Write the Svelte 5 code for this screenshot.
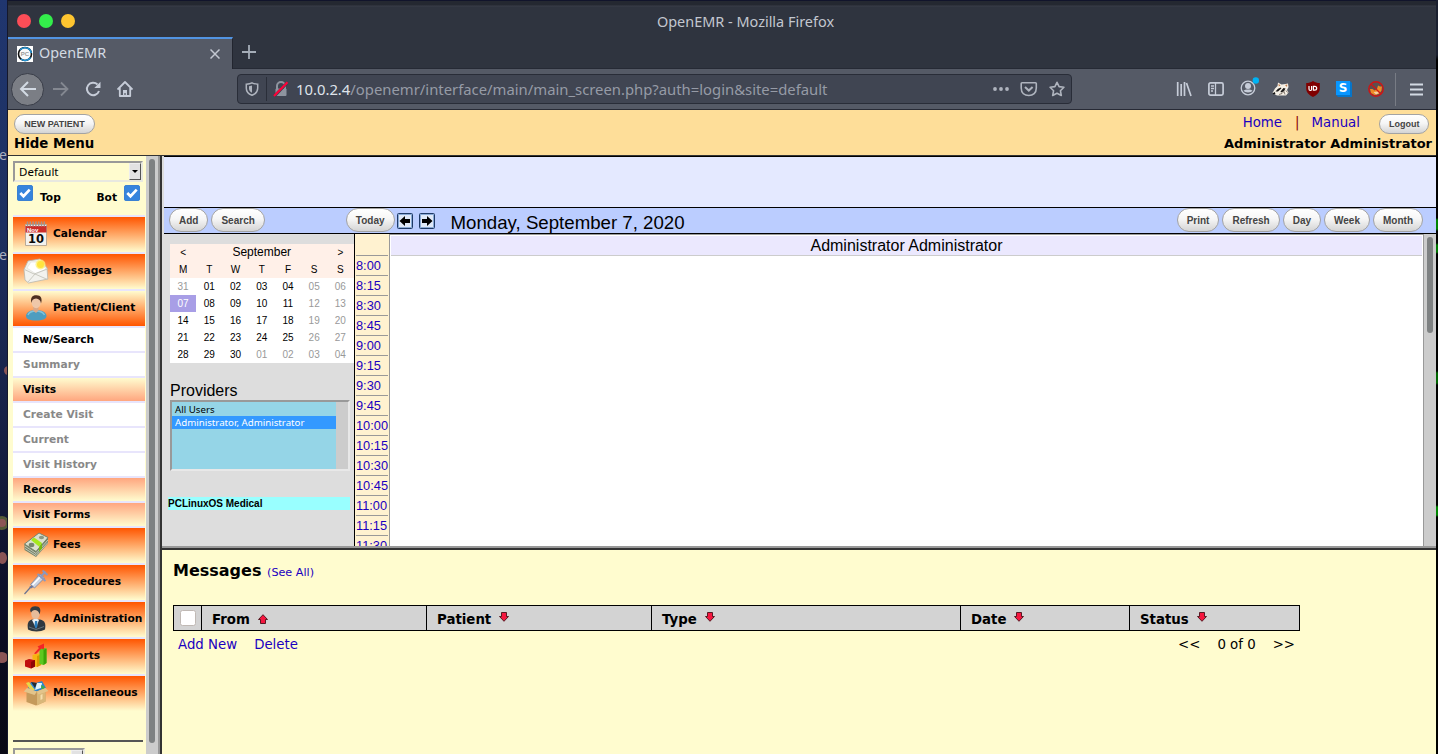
<script>
  const menu = [
    { label: 'Calendar', icon: 'cal', kind: 'top' },
    { label: 'Messages', icon: 'mail', kind: 'top' },
    { label: 'Patient/Client', icon: 'person', kind: 'top open' },
    { label: 'New/Search', kind: 'sub' },
    { label: 'Summary', kind: 'sub off' },
    { label: 'Visits', kind: 'sub group open' },
    { label: 'Create Visit', kind: 'sub off' },
    { label: 'Current', kind: 'sub off' },
    { label: 'Visit History', kind: 'sub off' },
    { label: 'Records', kind: 'sub group' },
    { label: 'Visit Forms', kind: 'sub group' },
    { label: 'Fees', icon: 'money', kind: 'top' },
    { label: 'Procedures', icon: 'syringe', kind: 'top' },
    { label: 'Administration', icon: 'admin', kind: 'top' },
    { label: 'Reports', icon: 'chart', kind: 'top' },
    { label: 'Miscellaneous', icon: 'box', kind: 'top' }
  ];
  const weekdays = ['M', 'T', 'W', 'T', 'F', 'S', 'S'];
  const first = new Date(2020, 7, 31);
  const days = Array.from({ length: 35 }, (_, i) => {
    const d = new Date(first.getFullYear(), first.getMonth(), first.getDate() + i);
    return {
      text: String(d.getDate()).padStart(2, '0'),
      dim: d.getMonth() !== 8 || i % 7 > 4,
      today: i === 7
    };
  });
  const slots = Array.from({ length: 15 }, (_, i) => `${8 + Math.floor(i / 4)}:${String((i % 4) * 15).padStart(2, '0')}`);
  const columns = [
    { label: 'From', up: true },
    { label: 'Patient' },
    { label: 'Type' },
    { label: 'Date' },
    { label: 'Status' }
  ];
  const views = ['Print', 'Refresh', 'Day', 'Week', 'Month'];
</script>

{#snippet check()}
  <svg class="check" width="16" height="16" viewBox="0 0 16 16">
    <rect width="16" height="16" rx="2.5" fill="#3684dd" />
    <rect x=".5" y=".5" width="15" height="15" rx="2" fill="none" stroke="#3a80d2" />
    <path d="M3.3 8l3.200 3.200 6.200-6.600" fill="none" stroke="#fff" stroke-width="2.700" />
  </svg>
{/snippet}

{#snippet arrow(left)}
  <svg class="navarrow" width="16" height="16" viewBox="0 0 16 16">
    <rect x=".5" y=".5" width="15" height="15" rx="1" fill="#cfe0f7" stroke="#1f3a66" />
    <rect x="1.5" y="1.5" width="13" height="13" fill="#dfe9f8" stroke="#8aaad6" />
    <path transform={left ? '' : 'matrix(-1 0 0 1 16 0)'} d="M2.500 8L8 3v3h5v4H8v3z" fill="#000" />
  </svg>
{/snippet}

{#snippet menuIcon(name)}
  <svg class="micon" width="26" height="26" viewBox="0 0 26 26">
    {#if name === 'cal'}
      <path d="M2.500 3.500h21v21h-21z" fill="#f4f2ee" stroke="#b9aa97" />
      <path d="M2.500 5h21v6.500h-21z" fill="#cc2d2a" />
      <path d="M4.500.5v5M7.300.5v5M10.100.5v5M12.900.5v5M15.700.5v5M18.500.5v5M21.300.5v5" stroke="#a3938f" stroke-width="1.500" />
      <text x="4" y="10.700" font-family="Liberation Sans" font-weight="700" font-size="6" fill="#fff">Nov</text>
      <text x="13" y="22" text-anchor="middle" font-family="DejaVu Sans" font-weight="700" font-size="11.5" fill="#0a0a0a">10</text>
    {:else if name === 'mail'}
      <path d="M1 11.500L5 3l12-2 7 9 .8 11L5.500 25 2 22z" fill="#f2f2ee" stroke="#b8b8ae" stroke-width=".8" />
      <path d="M4 10l4-6h9l6 7-10 5z" fill="#fff" stroke="#deded8" stroke-width=".6" />
      <path d="M1.500 11.500l9.500 4.500 13.500-5M5 24l7-8 12.500 5.500" fill="none" stroke="#c4c4bb" stroke-width=".9" />
      <circle cx="17.500" cy="6.500" r="5" fill="#fff176" opacity=".8" /><circle cx="17.500" cy="6.500" r="3.500" fill="#ffe43e" />
    {:else if name === 'person'}
      <path d="M3 21c0-4 5-6 10-6s10.500 2 10.500 6c0 3-4 4.500-10.500 4.500S3 24 3 21z" fill="#4d9dc0" />
      <path d="M5 20c1-3 4-4 8-4s7 1 8.500 4" fill="none" stroke="#82c4dc" stroke-width="1.400" />
      <path d="M10.500 11h5v4.500L13 18l-3-2.500z" fill="#d9a889" />
      <ellipse cx="13.200" cy="7.500" rx="4.500" ry="5.700" fill="#efc7a9" />
      <path d="M8.500 8C7 2.500 9.500 0 13.500 0.200 18 .2 19.500 3.500 18 8.500 17.500 5 16 4 13 3.500 10 3.800 9 5 8.500 8z" fill="#4d2f20" />
    {:else if name === 'money'}
      <path d="M1.500 12L16 1l9 4.500v6L13 25 1.500 18z" fill="#77856b" />
      <path d="M1.500 12L16 1l9 4.500L13 19.500z" fill="#dce0cd" stroke="#6a7860" stroke-width=".8" />
      <path d="M2 14l11 7.500L25 8M2 16.500l11 7L25 10.500" fill="none" stroke="#dfe3d5" stroke-width=".7" />
      <ellipse cx="8.500" cy="13" rx="2.800" ry="2.200" fill="#76856e" /><ellipse cx="18.500" cy="5.500" rx="2.600" ry="1.800" fill="#8b9881" />
      <path d="M8 8l3-2.500 8 5.500-3 3.500z" fill="#a4e81c" />
      <path d="M16 15l3-4v5.500l-3 3.500z" fill="#76b910" />
    {:else if name === 'syringe'}
      <path d="M1.500 25L10 15.500" stroke="#6b7390" stroke-width="1.200" />
      <path d="M7.500 15.500L17 5l4.500 4L11.500 19z" fill="#cbd3e2" stroke="#7f88a2" stroke-width=".9" />
      <path d="M9.500 16L18 7" stroke="#fff" stroke-width="1.500" />
      <path d="M14.500 5l8 7M18.500 7l4-4.500M19.500 1.500l5 4.500" fill="none" stroke="#8d98bb" stroke-width="2" />
      <path d="M6 18l3-1.500 1.500 1.500-2.500 1.500z" fill="#6b779d" />
    {:else if name === 'admin'}
      <path d="M5 23.500c-1-6 0-9 4-10h8c5 1 6 4 5 10-4 2.500-13 2.500-17 0z" fill="#303840" />
      <path d="M9 14l4 8 3-8-3-2z" fill="#e9eff3" />
      <path d="M12 15h2.200l.3 5-1.500 3-1.500-3z" fill="#287dbd" />
      <path d="M6 21l7 2.500 8-3" fill="none" stroke="#65737b" stroke-width="1" />
      <ellipse cx="12.500" cy="7.500" rx="4.300" ry="5.500" fill="#e7bc9a" />
      <path d="M8 6.500C6 3 8 .5 12 .2c5-.2 6.500 3 4.500 8.300C16 6 15 4.500 12 4c-2 .3-3 1-4 2.500z" fill="#353c42" />
    {:else if name === 'chart'}
      <path d="M2 17.500l4-1.500 6 1v6.500L8 25.500l-6-2z" fill="#c00d0d" /><path d="M8 19l4-2v6.500l-4 2z" fill="#8f0505" />
      <path d="M9.500 12l5-1.500 3.500 1V22l-4 2-2-.5V17l-2.500-.5z" fill="#f7b410" /><path d="M14 13l4-1.500V22l-4 2z" fill="#dd9600" />
      <path d="M16.500 6l3.500-1.500 3.500 1V20l-3 2-4-1z" fill="#5cc81f" /><path d="M20.500 7l3-1.500V20l-3 2z" fill="#3aa308" />
      <path d="M11 10.500l5-5.500-1.500-1.500L21 .5v6l-2.500-1L13 11z" fill="#f32525" />
    {:else}
      <path d="M5 8l3-6 5 1 6-2 4 7-10 4z" fill="#2c86d0" /><path d="M3 3l3-1 6 8-4 1z" fill="#e6d84a" /><path d="M8 2l6 1-2 5z" fill="#242b30" />
      <path d="M14 3l5 0-1 5-6 2z" fill="#e2f4f7" /><path d="M18 5l4 2-3 4z" fill="#3cac4a" />
      <path d="M3.500 10L13 11.500l9.500-3v13L13 25.500 3.500 22z" fill="#c59a5b" />
      <path d="M14 11.500l8.500-3v13L14 25.500z" fill="#d9b779" />
      <path d="M4 8L.8 11.500 11.500 15l2.500-3.500zM14 11.500l1.500 3 10-3.500-3-3z" fill="#e3c48a" />
      <path d="M17.500 15v5l2-1v-5z" fill="#f6dfae" />
    {/if}
  </svg>
{/snippet}

<div class="desktop">
  <div class="wall">
    <span class="w1">e</span><span class="w2">se</span>
    <i class="p1"></i><i class="p2"></i><i class="p3"></i><i class="p4"></i>
  </div>
  <div class="window">
    <div class="titlebar">
      <div class="lights"><i></i><i></i><i></i></div>
      <div class="title">OpenEMR - Mozilla Firefox</div>
      <div></div>
    </div>
    <div class="tabs">
      <div class="tab">
        <svg width="16" height="16" viewBox="0 0 16 16">
          <rect width="16" height="16" fill="#fff" />
          <circle cx="8" cy="8" r="6.500" fill="#fafafa" stroke="#111" stroke-width="1.600" />
          <path d="M3 4a6.500 6.500 0 0 1 11.300 3M13.500 11.500A6.500 6.500 0 0 1 4 13" fill="none" stroke="#2292d2" stroke-width="1.600" />
          <text x="8" y="10.300" text-anchor="middle" font-size="6" font-weight="700" font-family="Liberation Sans" fill="#9a9a9a">PC</text>
        </svg>
        <span>OpenEMR</span>
        <svg width="10" height="10" viewBox="0 0 10 10"><path d="M.5.5l9 9M9.500.5l-9 9" stroke="#c3c7d1" stroke-width="1.500" /></svg>
      </div>
      <svg class="plus" width="14" height="14" viewBox="0 0 14 14"><path d="M7 0v14M0 7h14" stroke="#a5adb8" stroke-width="1.800" /></svg>
    </div>
    <div class="toolbar">
      <div class="back"><svg width="18" height="18" viewBox="0 0 18 18"><path d="M17 9H2.500M9 2L2 9l7 7" fill="none" stroke="#d3dae3" stroke-width="2" /></svg></div>
      <svg class="fwd" width="16" height="16" viewBox="0 0 16 16"><path d="M0 8h14M8 1.500L14.500 8 8 14.500" fill="none" stroke="#848891" stroke-width="1.800" /></svg>
      <svg class="reload" width="16" height="16" viewBox="0 0 16 16"><path d="M14 10a6.200 6.200 0 1 1-1.500-6.500" fill="none" stroke="#c6ccd8" stroke-width="2" /><path d="M15.500.8V7H9.300z" fill="#c6ccd8" /></svg>
      <svg class="house" width="16" height="16" viewBox="0 0 16 16"><path d="M.5 8.500L8 1l7.500 7.500M2.800 7v8h10.400V7" fill="none" stroke="#c6ccd8" stroke-width="1.800" stroke-linejoin="round" /><path d="M6 15V9h4v6H8.600v-3H7.400v3z" fill="#c6ccd8" /></svg>
      <div class="url">
        <svg class="shield" width="14" height="14" viewBox="0 0 14 14"><path d="M7 .8C5 1.800 3.500 2 1.300 2.200v4C1.300 10 3.500 12 7 13.300c3.500-1.300 5.700-3.300 5.700-7.100v-4C10.500 2 9 1.800 7 .8z" fill="none" stroke="#afb4be" stroke-width="1.500" /><path d="M7 3.500L4 4.200v2.300C4 8.500 5 9.800 7 10.800z" fill="#afb4be" /></svg>
        <svg class="lock" width="16" height="16" viewBox="0 0 16 16"><path d="M4 8V5a4 4 0 0 1 8 0v3" fill="none" stroke="#8e949f" stroke-width="2" /><rect x="2.500" y="7.500" width="11" height="7.500" rx="1" fill="#8e949f" /><path d="M1.500 15L14.500 1.500" stroke="#3c414d" stroke-width="3" /><path d="M1 15L14.500 1.200" stroke="#ff0039" stroke-width="2.100" /></svg>
        <span class="addr"><b>10.0.2.4</b>/openemr/interface/main/main_screen.php?auth=login&amp;site=default</span>
        <svg width="66" height="18" viewBox="0 0 66 18" class="urlicons">
          <g fill="#afb4be"><circle cx="2" cy="9" r="1.900" /><circle cx="8" cy="9" r="1.900" /><circle cx="14" cy="9" r="1.900" /></g>
          <path d="M29 2.800h13.500q.8 0 .8.800V8c0 5-3.300 7.500-7.500 7.500S28.200 13 28.200 8V3.600q0-.8.800-.8z" fill="none" stroke="#afb4be" stroke-width="1.600" /><path d="M32 7l3.800 3.600L39.600 7" fill="none" stroke="#afb4be" stroke-width="2" />
        </svg>
        <svg class="star" width="16" height="16" viewBox="0 0 16 16"><path d="M8 1.300l2.100 4.300 4.800.7-3.500 3.400.9 4.800L8 12.200l-4.300 2.300.9-4.800L1.100 6.300l4.800-.7z" fill="none" stroke="#afb4be" stroke-width="1.600" stroke-linejoin="round" /></svg>
      </div>
      <div class="exts">
        <svg width="16" height="16" viewBox="0 0 16 16"><path d="M1.700 1v14M5.200 3v12M8.500 1v14M10.500 2l4.500 13" fill="none" stroke="#c6ccd8" stroke-width="1.700" /></svg>
        <svg width="16" height="16" viewBox="0 0 16 16"><rect x=".9" y="1.900" width="14.200" height="12.200" rx="1.600" fill="none" stroke="#c6ccd8" stroke-width="1.700" /><path d="M7.500 2v12M3 5h3M3 7.500h3M3 10h2" stroke="#c6ccd8" stroke-width="1.300" /></svg>
        <svg width="20" height="20" viewBox="0 0 20 20"><circle cx="9" cy="11" r="6.800" fill="none" stroke="#c6ccd8" stroke-width="1.300" /><circle cx="9" cy="9" r="3" fill="#c6ccd8" /><path d="M4.500 13.500c1.500-1.500 7.500-1.500 9 0-1 2.500-8 2.500-9 0z" fill="#c6ccd8" /><circle cx="16.800" cy="3.500" r="3.200" fill="#00b3f4" /></svg>
        <svg width="17" height="16" viewBox="0 0 17 16">
          <path d="M.5 12L3 7.500 5.500 5 6 1.500 9.500 3.500 13.500 3l2.500-.5.5 3.500-1.500 3 1.500 2.500-2.500 3H5z" fill="#f4efe6" />
          <path d="M6.500 3l2 1.300L6.800 5.500zM13 4l2.300-.5-.3 2.500z" fill="#c47a45" />
          <path d="M3.500 10.500L6 7.800l3-1.300.3 1L6 10.500zM8.500 10.500l3-3.500 2 .5-1.500 2.800L9 11.500z" fill="#1d1b1a" />
          <path d="M.5 12.500l2-1.500 1 1.500-1.500 1z" fill="#111" />
          <path d="M7 13.500l3-1 2-2 1 3M14 9.500l1.500 2" fill="none" stroke="#6a5c50" stroke-width=".8" />
        </svg>
        <svg width="16" height="16" viewBox="0 0 16 16"><path d="M8 0c2.500 1.500 4 2 6.800 2v5.500c0 4-3 6.500-6.800 8.500-3.800-2-6.800-4.500-6.800-8.500V2C4 2 5.500 1.500 8 0z" fill="#800000" /><path d="M4 5v3q0 1.500 1.300 1.500T6.600 8V5" fill="none" stroke="#fff" stroke-width="1.200" /><path d="M8.400 5.400h1.300q2 0 2 1.900t-2 1.900H8.400z" fill="none" stroke="#fff" stroke-width="1.200" /></svg>
        <svg width="16" height="16" viewBox="0 0 16 16"><path d="M0 0h14l2 2v14H2l-2-2z" fill="#0675c9" /><path d="M0 0h14v14H0z" fill="#0996ff" /><text x="7" y="11.300" text-anchor="middle" font-family="DejaVu Sans" font-weight="700" font-size="12" fill="#fff">S</text></svg>
        <svg width="16" height="16" viewBox="0 0 16 16"><circle cx="8" cy="8" r="7.200" fill="#5b4f50" stroke="#cf1414" stroke-width="1.400" /><path d="M2 8l2.500 0 2 1.500 2.500-1.500 1-3.500 2 1 2 0-.5 4-2.500 3.500-4.500 1L3 12z" fill="#ee8b25" /><path d="M5.500 11l4.500-.5 1 1.500-3 1.500z" fill="#f7d0a2" /><path d="M3 3l10 10" stroke="#d01515" stroke-width="1.300" /></svg>
      </div>
      <svg class="burger" width="13" height="13" viewBox="0 0 13 13"><path d="M0 1.500h13M0 6.500h13M0 11.500h13" stroke="#d3dae3" stroke-width="2" /></svg>
    </div>

    <header class="emr">
      <div><button class="pill small">NEW PATIENT</button><strong>Hide Menu</strong></div>
      <div class="right">
        <div class="links"><a href="#home">Home</a><em>|</em><a href="#manual">Manual</a><button class="pill small">Logout</button></div>
        <strong class="who">Administrator Administrator</strong>
      </div>
    </header>

    <div class="frames">
      <aside>
        <div class="select"><span>Default</span><i></i></div>
        <div class="checks">{@render check()}<span>Top</span><span class="bot">Bot</span>{@render check()}</div>
        <ul>
          {#each menu as item}
            <li class={item.kind}>
              {#if item.icon}{@render menuIcon(item.icon)}{/if}<span>{item.label}</span>
            </li>
          {/each}
        </ul>
        <div class="rule"></div>
        <div class="popsel"><span>Popups</span><i></i></div>
      </aside>
      <div class="vscroll"><i></i></div>
      <div class="divider"></div>
      <main>
        <section class="calendar">
          <div class="banner"></div>
          <div class="calbar">
            <button class="pill">Add</button><button class="pill">Search</button>
            <button class="pill today">Today</button>
            {@render arrow(true)}{@render arrow(false)}
            <span class="date">Monday, September 7, 2020</span>
            <div class="views">{#each views as v}<button class="pill">{v}</button>{/each}</div>
          </div>
          <div class="calbody">
            <div class="side">
              <div class="mini">
                <div class="month"><span>&lt;</span><b>September</b><span>&gt;</span></div>
                <div class="grid week">{#each weekdays as w}<span>{w}</span>{/each}</div>
                <div class="grid">{#each days as d}<span class:dim={d.dim} class:now={d.today}>{d.text}</span>{/each}</div>
              </div>
              <div class="ptitle">Providers</div>
              <div class="plist"><div>All Users</div><div class="sel">Administrator, Administrator</div></div>
              <div class="facility">PCLinuxOS Medical</div>
            </div>
            <div class="times"><div class="slot head"></div>{#each slots as s}<div class="slot">{s}</div>{/each}</div>
            <div class="day"><div class="provider">Administrator Administrator</div></div>
            <div class="dayscroll"><i></i></div>
          </div>
        </section>
        <section class="messages">
          <h2>Messages <a href="#all">(See All)</a></h2>
          <div class="thead">
            <div><i class="cb"></i></div>
            {#each columns as c}
              <div>{c.label}
                <svg class:up={c.up} width="10" height="10" viewBox="0 0 10 10"><path d="M2.500.500h5v4h2L5 9.300.500 4.500h2z" fill="#f5173f" stroke="#4a1018" stroke-width=".9" /></svg>
              </div>
            {/each}
          </div>
          <div class="tfoot"><a href="#add">Add New</a><a href="#del">Delete</a><span class="pager"><span>&lt;&lt;</span><span>0 of 0</span><span>&gt;&gt;</span></span></div>
        </section>
      </main>
    </div>
  </div>
  <div class="edge"></div>
</div>

<style>
  :global(body) { overflow: hidden; background: #000; }
  * { box-sizing: border-box; }
  svg { display: block; flex: none; }
  a { color: #1a00c0; text-decoration: none; }
  .desktop { display: grid; grid-template-columns: 8px 1428px 2px; height: 754px; overflow: hidden; font-family: "DejaVu Sans", sans-serif; font-size: 13.33px; color: #000; }
  .wall { position: relative; overflow: hidden; background: linear-gradient(#20366f, #1d3060 30%, #172146 55%, #0b0c20 85%, #090914); border-right: 1px solid #15182b; font: 14px "Noto Sans", sans-serif; color: #aab0c0; }
  .wall span { position: absolute; right: 0; }
  .w1 { top: 145px; } .w2 { top: 245px; }
  .wall i { position: absolute; border-radius: 50%; background: #8b5555; }
  .p1 { top: 366px; left: 4px; width: 8px; height: 9px; }
  .p2 { top: 516px; left: -5px; width: 14px; height: 14px; border: 3px solid #555b38; }
  .p3 { top: 552px; left: -2px; width: 9px; height: 12px; }
  .p4 { top: 652px; left: -4px; width: 12px; height: 11px; }
  .edge { background: linear-gradient(#1b2030 55px, #000 60px 218px, #008500 220px 229px, #000 231px 243px, #007800 245px 252px, #000 254px 371px, #060 373px 383px, #000 385px 505px, #080 507px 515px, #000 517px); }
  .window { display: grid; grid-template-rows: 36px 32px 41px 46px 598px; border-top: 1px solid #11142b; height: 754px; overflow: hidden; background: #2f343f; }
  .titlebar { display: grid; grid-template-columns: 1fr auto 1fr; align-items: center; background: linear-gradient(#242831 4px, #393d48 5px, #2f343f 6px); padding: 4px 0 0 47px; font: 14.45px "Noto Sans", sans-serif; color: #c3c7cf; }
  .lights { display: flex; gap: 8px; margin-left: -38px; }
  .lights i { width: 14px; height: 14px; border-radius: 50%; background: #fc4d57; }
  .lights i:nth-child(2) { background: #33ed4b; }
  .lights i:nth-child(3) { background: #fec530; }
  .tabs { display: flex; border-bottom: 1px solid #262a35; align-items: center; }
  .tab { width: 225px; height: 32px; align-self: flex-start; background: #555a66; border-top: 2px solid #5294e2; border-right: 1px solid #22252f; display: flex; align-items: center; padding: 0 12px 0 9px; font: 14.4px/20px "Noto Sans", sans-serif; color: #d3dae3; }
  .tab span { flex: 1; margin: -3px 0 0 6px; }
  .plus { margin: -1px 0 0 9px; }
  .toolbar { display: flex; align-items: center; background: #555a66; border-bottom: 1px solid #272a35; }
  .back { width: 33px; height: 33px; margin-left: 3px; border-radius: 50%; background: #7b7e85; border: 1px solid #393d48; display: grid; place-items: center; }
  .fwd { margin-left: 9px; } .reload { margin-left: 16px; } .house { margin-left: 16px; }
  .url { width: 835px; height: 30px; margin-left: 104px; background: #404552; border: 1px solid #292d38; border-radius: 4px; display: flex; align-items: center; font: 14.83px "Noto Sans", sans-serif; }
  .shield { margin-left: 7px; }
  .lock { margin-left: 7px; border-left: 1px solid #2a2e39; box-sizing: content-box; padding: 4px 0 4px 6px; }
  .addr { margin-left: 7px; color: #969ba6; flex: 1; white-space: nowrap; }
  .addr b { font-weight: 400; color: #dfe3ea; }
  .urlicons { margin-right: -10px; } .star { margin-right: 6px; }
  .exts { display: flex; flex: 1; justify-content: space-between; padding: 0 11px 0 104px; align-items: center; }
  .exts svg:nth-child(3) { margin: -4px -3px 0 0; }
  .burger { box-sizing: content-box; border-left: 1px solid #787c85; padding: 10px 13px 10px 14px; }
  .pill { font: 700 10px "Liberation Sans", sans-serif; color: #444; height: 24px; padding: 0 9px; border: 1px solid #a3a3a3; border-radius: 12px; background: linear-gradient(#fff, #f6f6f6 45%, #d4d4d4); margin: 0; white-space: nowrap; }
  .pill.small { font-size: 9px; height: 20px; }
  .emr { display: flex; justify-content: space-between; background: #fede99; padding: 4px 4px 0 6px; border-bottom: 1px solid #333; line-height: 17px; }
  .emr strong { display: block; margin-top: 1px; }
  .emr .small { display: block; width: 81px; }
  .right { text-align: right; }
  .links { display: flex; height: 20px; justify-content: flex-end; padding-right: 3px; }
  .links em { font-style: normal; color: #800; margin: 0 12px 0 13px; }
  .links .small { width: 50px; margin-left: 19px; }
  .emr .who { font-size: 13px; }
  .frames { display: grid; grid-template-columns: 138px 12px 4px 1274px; height: 598px; }
  aside { background: #fffccf; padding: 5px 1px 0 5px; overflow: hidden; }
  .select, .popsel { width: 130px; height: 21px; border: 2px solid; border-color: #999 #e8e8e0 #e8e8e0 #999; display: flex; justify-content: space-between; align-items: center; padding-left: 4px; font: 11.5px "Noto Sans", sans-serif; }
  .select i, .popsel i { width: 12px; height: 17px; background: #e2e2e2; border: 1px solid; border-color: #eee #555 #555 #eee; display: grid; place-items: center; }
  .select i::after { content: ""; border: 3px solid transparent; border-top-color: #000; margin-top: 3px; }
  .checks { display: flex; height: 33px; padding: 3px 5px 0 4px; font-weight: 700; font-size: 10.67px; line-height: 26px; }
  .checks span { margin-left: 7px; }
  .checks .bot { margin: 0 7px 0 auto; }
  ul { margin: 0; padding: 0; list-style: none; font-weight: 700; font-size: 10.67px; width: 132px; white-space: nowrap; }
  li { border-top: 2px solid #e8e5fc; }
  li.top { height: 37px; background: linear-gradient(#ff5500, #fffccf) padding-box; display: flex; align-items: center; padding: 0 0 3px 10px; }
  li.top span { margin-left: 4px; }
  li.top .micon { margin-top: 2px; }
  li.top.open { background: linear-gradient(#fffccf, #ff5500) padding-box; }
  li.sub { height: 25px; background: #fff; padding-left: 10px; line-height: 24px; }
  li.off { color: #888; }
  li.group { background: linear-gradient(#ffa67f, #fffccf) padding-box; }
  li.group.open { background: linear-gradient(#fffccf, #ffa67f) padding-box; }
  .rule { width: 130px; height: 2px; background: #555; margin: 29px 0 6px; }
  .popsel { width: 72px; }
  .vscroll { background: #ccc; padding: 3px; }
  .vscroll i, .dayscroll i { display: block; background: #7e8182; border-radius: 3px; }
  .vscroll i { width: 6px; height: 584px; }
  .divider { background: linear-gradient(90deg, #999 2px, #333 2px); }
  main { display: grid; grid-template-rows: 394px 204px; height: 598px; overflow: hidden; }
  .calendar { display: grid; grid-template-rows: 52px 27px 311px; border-bottom: 2px solid #333; background: #ddd; overflow: hidden; font-family: "Liberation Sans", sans-serif; height: 394px; box-shadow: inset 0 -2px #999; }
  .banner { margin-left: 2px; background: #e4e9ff; border: solid #000; border-width: 1px 0; }
  .calbar { margin-left: 2px; background: #bbcdff; border-bottom: 1px solid #000; display: flex; align-items: flex-start; padding: 0 13px 0 5px; height: 26px; }
  .calbar .pill + .pill { margin-left: 3px; }
  .calbar .pill.today { margin-left: 81px; }
  .navarrow { margin: 5px 0 0 2px; }
  .navarrow + .navarrow { margin-left: 6px; }
  .date { font-size: 18.67px; margin-left: 16px; line-height: 30px; white-space: nowrap; }
  .views { margin-left: auto; display: flex; }
  .calbody { display: grid; grid-template-columns: 192px 36px 1034px 12px; height: 312px; margin-top: -1px; overflow: hidden; }
  .side { padding: 10px 0 0 6px; }
  .mini { margin-left: 2px; width: 183.500px; background: #fff; font-size: 10px; line-height: 17px; }
  .month, .grid { display: grid; grid-template-columns: repeat(7, 1fr); text-align: center; }
  .month, .week { background: #fff0e8; }
  .month b { grid-column: 2 / 7; font-weight: 400; font-size: 12px; }
  .dim { color: #999; }
  .now { background: #a89ee6; color: #fff; }
  .ptitle { font-size: 16px; margin: 18px 0 0 2px; line-height: 19px; }
  .plist { margin: 0 0 0 2px; height: 71px; width: 180px; border: 2px solid; border-color: #999 #e8e8e8 #e8e8e8 #999; background: linear-gradient(90deg, #95d5e7 164px, #ccc 164px); font: 9.7px/13px "Noto Sans", sans-serif; padding-top: 1px; }
  .plist div { width: 164px; padding-left: 3px; }
  .plist .sel { background: #3399ff; color: #fff; }
  .facility { margin: 26px 4px 0 0; background: #99ffff; font-size: 10px; font-weight: 700; line-height: 13px; }
  .times { background: #fff2d0; border-left: 1px solid #000; border-right: 1px solid #999; padding: 0 1px; height: 312px; overflow: hidden; }
  .slot { height: 20px; border-bottom: 1px solid #999; font-size: 12.8px; line-height: 20px; color: #1a00c0; white-space: nowrap; }
  .slot.head { height: 22px; }
  .day { background: #fff; border-top: 1px solid #999; border-right: 1px solid #999; padding: 1px 1px 0 1px; }
  .provider { height: 20px; background: #ebe8fe; border-bottom: 1px solid #ccc; font-size: 16px; line-height: 19px; text-align: center; }
  .dayscroll { background: #ccc; padding: 3px; }
  .dayscroll i { width: 6px; height: 96px; }
  .messages { background: #fffccf; padding: 11px 0 0 11px; }
  h2 { margin: 0; font-size: 16px; line-height: 19px; }
  h2 a { font-size: 11.2px; font-weight: 400; }
  .thead { display: grid; grid-template-columns: 27px 225px 225px 309px 169px 170px; width: 1127px; height: 26px; margin-top: 23px; background: #d3d3d3; border: 1px solid #000; font-weight: 700; }
  .thead div { display: flex; align-items: center; padding: 2px 0 0 10px; border-left: 1px solid #000; }
  .thead div:first-child { border: 0; padding: 0 0 0 6px; }
  .thead svg { margin: -4px 0 0 8px; }
  .thead svg.up { transform: rotate(180deg); margin-top: 0; }
  .cb { width: 16px; height: 16px; background: #fff; border: 1px solid #c0b9b4; border-radius: 2.5px; }
  .tfoot { display: flex; width: 1127px; padding: 5px 5px 0; line-height: 17px; gap: 17px; }
  .pager { margin-left: auto; display: flex; gap: 17px; }
</style>
